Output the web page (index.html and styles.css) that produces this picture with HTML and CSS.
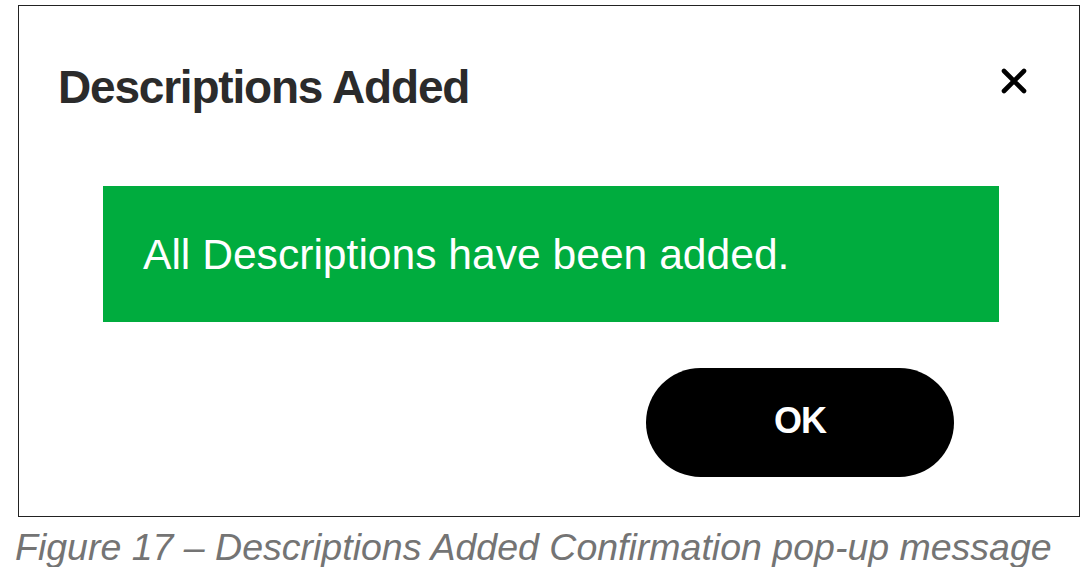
FILE: index.html
```html
<!DOCTYPE html>
<html>
<head>
<meta charset="utf-8">
<link rel="stylesheet" href="styles.css">
</head>
<body>
<div class="dialog">
  <div class="header">
    <h1 class="title">Descriptions Added</h1>
    <button class="close" aria-label="Close">
      <svg width="26" height="26" viewBox="0 0 26 26"><path d="M3 3 L23 23 M23 3 L3 23" stroke="#000" stroke-width="4.6" stroke-linecap="round"/></svg>
    </button>
  </div>
  <div class="notice">All Descriptions have been added.</div>
  <div class="actions">
    <button class="ok">OK</button>
  </div>
</div>
<p class="caption">Figure 17 – Descriptions Added Confirmation pop-up message</p>
</body>
</html>
```
FILE: styles.css
```css
html, body {
  margin: 0;
  padding: 0;
  background: #fff;
}
body {
  font-family: "Liberation Sans", Arial, sans-serif;
}
.dialog {
  box-sizing: border-box;
  margin: 5px 0 0 18px;
  width: 1062px;
  height: 512px;
  border: 1px solid #222;
  display: flex;
  flex-direction: column;
  padding: 53px 0 0 0;
}
.header {
  display: flex;
  align-items: center;
  justify-content: space-between;
  height: 56px;
  padding: 0 52px 0 39px;
}
.title {
  margin: 0;
  font-size: 46px;
  line-height: 56px;
  font-weight: 700;
  color: #2b2b2b;
  letter-spacing: -1.2px;
}
.close {
  border: 0;
  background: none;
  padding: 0;
  width: 26px;
  height: 26px;
  margin-top: -13px;
  display: flex;
}
.notice {
  margin: 71px 80px 0 84px;
  height: 136px;
  background: #00ac3e;
  color: #fff;
  font-size: 42.6px;
  display: flex;
  align-items: center;
  padding-left: 40px;
}
.actions {
  display: flex;
  justify-content: flex-end;
  padding-right: 125px;
  margin-top: 46px;
}
.ok {
  width: 308px;
  height: 109px;
  border: 0;
  border-radius: 55px;
  background: #000;
  color: #fff;
  font-family: "Liberation Sans", Arial, sans-serif;
  font-weight: 700;
  font-size: 36px;
  letter-spacing: -1px;
  padding: 0 0 3px 0;
}
.caption {
  margin: 10px 0 0 15px;
  font-size: 37.5px;
  line-height: 40px;
  font-style: italic;
  color: #747474;
}
```
